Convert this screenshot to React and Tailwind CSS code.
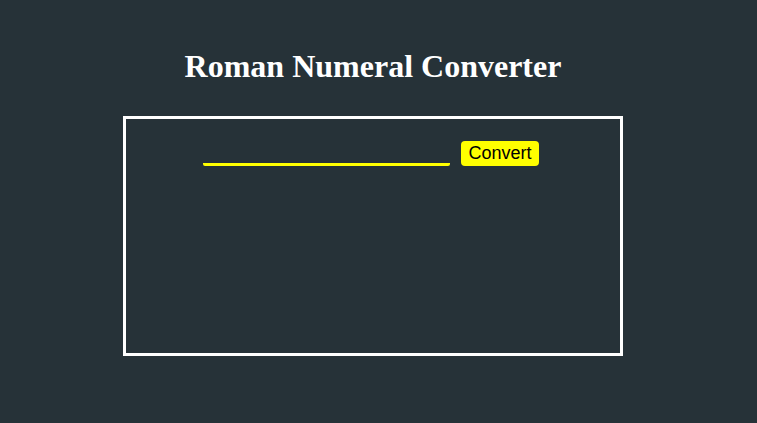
export default function App() {
  return (
    <div className="min-h-[423px] w-full bg-[#263238] pr-[11px] pt-[47px]">
      <h1
        className="text-center text-[32px] font-bold leading-[38px] text-white"
        style={{ fontFamily: '"Liberation Serif", "Times New Roman", serif' }}
      >
        Roman Numeral Converter
      </h1>
      <div className="mx-auto mt-[31px] h-[240px] w-[500px] border-[3px] border-white pt-[22px]">
        <div className="flex items-end justify-center gap-[11px] pr-[4px]">
          <input
            type="text"
            className="h-[24px] w-[247px] rounded-[2px] border-b-[3px] border-[#ffff00] bg-transparent text-white outline-none"
          />
          <button
            className="h-[25px] rounded-[4px] bg-[#ffff00] px-[7px] text-[18px] leading-[25px] text-black"
            style={{ fontFamily: '"Liberation Sans", Arial, sans-serif' }}
          >
            Convert
          </button>
        </div>
      </div>
    </div>
  );
}
